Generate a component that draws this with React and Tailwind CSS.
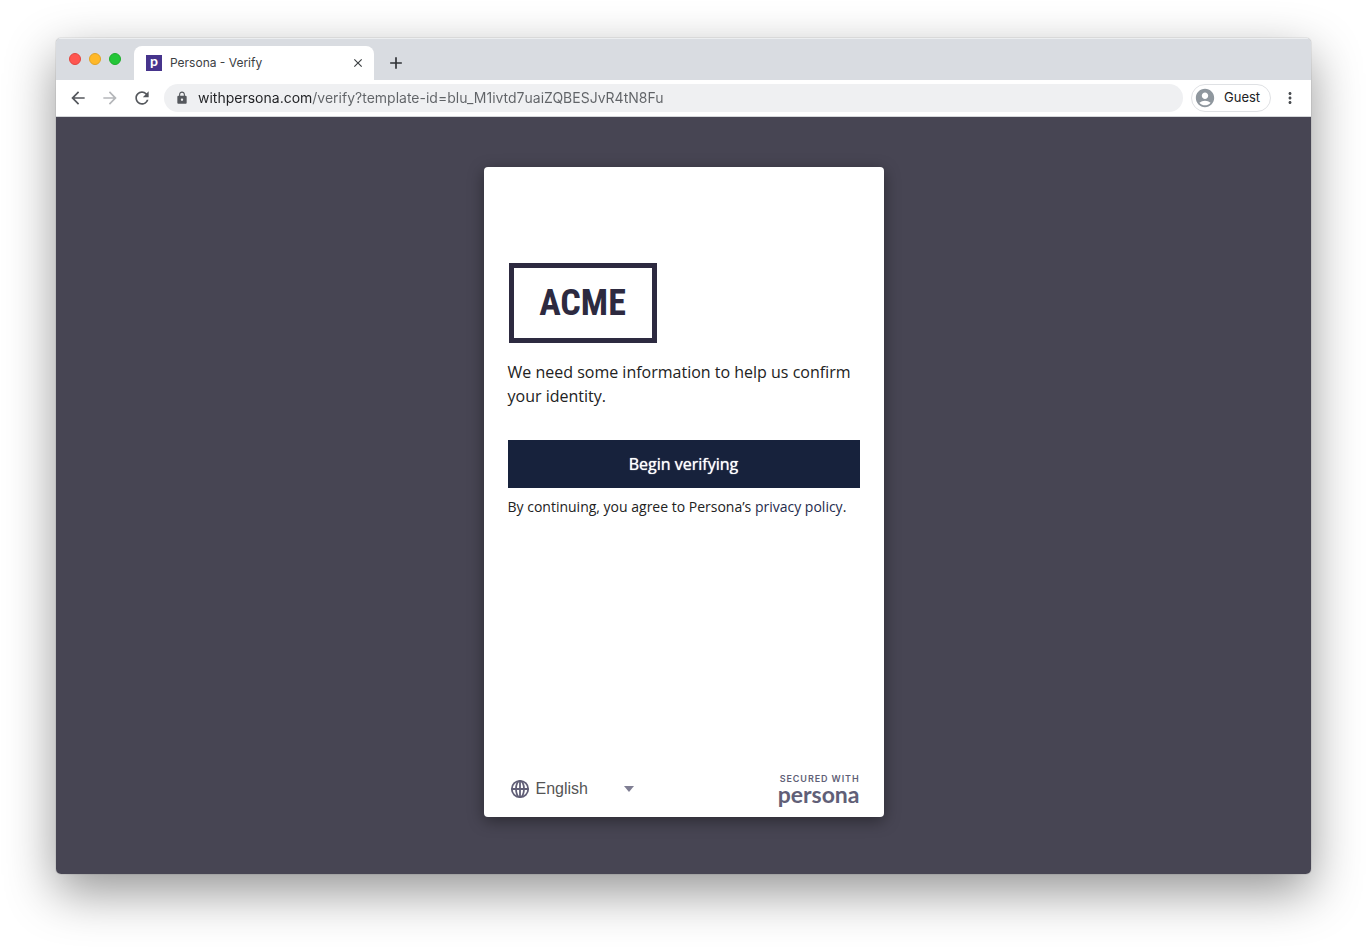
import { useState } from 'react';
import { MdArrowBack, MdArrowForward, MdRefresh, MdLock, MdAdd, MdClose, MdAccountCircle, MdMoreVert } from 'react-icons/md';

function TabStrip() {
  return (
    <div className="flex h-[42px] items-end bg-[#d9dce1] pl-[13px] shadow-[inset_0_1px_0_#eceef0]">
      <div className="flex gap-2 self-start pt-[15px]">
        <button aria-label="Close window" className="h-3 w-3 rounded-full border border-[#e2463f] bg-[#ff5650]" />
        <button aria-label="Minimize window" className="h-3 w-3 rounded-full border border-[#e1a325] bg-[#ffb828]" />
        <button aria-label="Zoom window" className="h-3 w-3 rounded-full border border-[#1dad2c] bg-[#24c638]" />
      </div>
      <div className="ml-[13px] flex h-[34px] w-60 items-center rounded-t-lg bg-white pr-[9px] pl-3">
        <span className="flex h-4 w-4 items-center justify-center bg-[#46348c] pb-1 font-['Lato',sans-serif] text-sm leading-none font-bold text-white">
          p
        </span>
        <span className="ml-2 flex-1 font-['Inter',sans-serif] text-xs text-[#3c4043]">Persona - Verify</span>
        <button aria-label="Close tab" className="text-[#3c4043]">
          <MdClose className="h-3.5 w-3.5" />
        </button>
      </div>
      <button aria-label="New tab" className="ml-3 flex h-[34px] items-center text-[#2f3236]">
        <MdAdd className="h-5 w-5" />
      </button>
    </div>
  );
}

function Toolbar() {
  return (
    <div className="flex h-[37px] items-center border-b border-[#d5d7da] bg-white px-3 font-['Inter',sans-serif]">
      <div className="flex gap-3 text-[#55585d]">
        <button aria-label="Back"><MdArrowBack className="h-5 w-5" /></button>
        <button aria-label="Forward" className="text-[#b5b7ba]"><MdArrowForward className="h-5 w-5" /></button>
        <button aria-label="Reload"><MdRefresh className="h-5 w-5" /></button>
      </div>
      <div className="ml-3 flex h-7 flex-1 items-center rounded-full bg-[#eff0f2] px-[11px]">
        <MdLock className="h-3.5 w-3.5 text-[#55585d]" />
        {/* host is darker than the rest of the address */}
        <input
          aria-label="Address"
          defaultValue="withpersona.com/verify?template-id=blu_M1ivtd7uaiZQBESJvR4tN8Fu"
          className="ml-[9px] flex-1 bg-[linear-gradient(90deg,#202124_114px,#606367_114px)] bg-clip-text text-sm text-transparent outline-none"
        />
      </div>
      <button className="ml-2 flex h-7 w-20 items-center gap-2 rounded-full border border-[#dfe1e4] pl-0.5 text-[13px] text-[#202124]">
        <MdAccountCircle className="h-[22px] w-[22px] text-[#8f979e]" />
        Guest
      </button>
      <button aria-label="Menu" className="ml-2.5 text-[#494c50]">
        <MdMoreVert className="h-[18px] w-[18px]" />
      </button>
    </div>
  );
}

function GlobeIcon() {
  return (
    <svg viewBox="0 0 20 20" className="h-5 w-5" fill="none" stroke="#615f77" strokeWidth="1.8" aria-hidden="true">
      <circle cx="10" cy="10" r="8.2" />
      <ellipse cx="10" cy="10" rx="4" ry="8.2" />
      <path d="M2 10h16M10 2v16" />
    </svg>
  );
}

function VerifyCard() {
  const [language, setLanguage] = useState('English');

  return (
    <section className="flex min-h-[650px] w-full max-w-[400px] flex-col rounded bg-white px-6 pt-24 pb-[13px] font-['Open_Sans',sans-serif] text-[#222] shadow-[0_4px_16px_rgba(0,0,0,0.4)]">
      <div className="ml-px flex h-20 w-[148px] items-center justify-center border-[5px] border-[#2d2a40] font-['Roboto_Condensed','Roboto',sans-serif] text-4xl font-bold text-[#2d2a40]">
        ACME
      </div>
      <p className="mt-[17px] text-base">We need some information to help us confirm your identity.</p>
      <button className="mt-8 h-12 w-full bg-[#17223c] text-base font-medium text-white [text-shadow:0_0_1px_#fff]">
        Begin verifying
      </button>
      <p className="mt-2 text-sm leading-[22px]">
        By continuing, you agree to Persona’s <a href="#privacy" className="text-[#1f2c4d]">privacy policy</a>.
      </p>
      <div className="mt-auto flex items-center justify-between">
        <div className="relative flex items-center pl-0.5">
          <GlobeIcon />
          <select
            aria-label="Language"
            value={language}
            onChange={(e) => setLanguage(e.target.value)}
            className="w-28 appearance-none pl-1.5 font-['Liberation_Sans',sans-serif] text-base text-[#555] outline-none"
          >
            <option>English</option>
          </select>
          <svg viewBox="0 0 10 6" className="pointer-events-none absolute right-2 h-1.5 w-2.5" fill="#7f7e93" aria-hidden="true">
            <path d="M0 0h10L5 6z" />
          </svg>
        </div>
        <div className="flex flex-col items-end text-[#615f77]">
          <span className="font-['Inter',sans-serif] text-[9px] leading-[10px] font-semibold tracking-widest">SECURED WITH</span>
          <span className="font-['Lato',sans-serif] text-[23px] leading-5 font-bold">persona</span>
        </div>
      </div>
    </section>
  );
}

export default function App() {
  return (
    <div className="flex min-h-screen flex-col bg-white px-14 pt-[38px] pb-[74px]">
      <div className="flex flex-1 flex-col overflow-hidden rounded-[5px] shadow-[0_0_1px_rgba(0,0,0,0.6),0_18px_50px_rgba(0,0,0,0.42)]">
        <TabStrip />
        <Toolbar />
        <main className="flex flex-1 items-start justify-center bg-[#474553] pt-[50px] pb-[57px]">
          <VerifyCard />
        </main>
      </div>
    </div>
  );
}
